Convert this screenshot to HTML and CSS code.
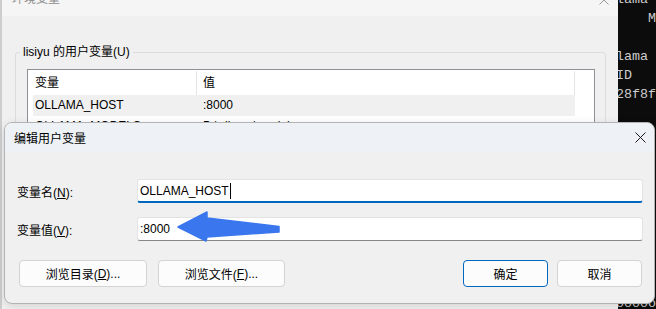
FILE: index.html
```html
<!DOCTYPE html>
<html lang="zh-CN">
<head>
<meta charset="utf-8">
<title>编辑用户变量</title>
<link rel="stylesheet" href="styles.css">
</head>
<body>
<div class="desktop">
  <div class="envwin">
    <div class="env-title">
      <span class="env-title-text">环境变量</span>
      <svg class="env-close" width="10" height="10" viewBox="0 0 10 10"><path d="M0.5 0.5 L9.5 9.5 M9.5 0.5 L0.5 9.5" stroke="#9a9a9a" stroke-width="1" fill="none"/></svg>
    </div>
    <div class="env-body">
      <fieldset class="group">
        <legend>lisiyu 的用户变量(U)</legend>
        <div class="list">
          <div class="list-row list-head">
            <div class="cell">变量</div><div class="cell">值</div>
          </div>
          <div class="list-row selected">
            <div class="cell">OLLAMA_HOST</div><div class="cell">:8000</div>
          </div>
          <div class="list-row">
            <div class="cell">OLLAMA_MODELS</div><div class="cell">D:\ollama\models</div>
          </div>
          <div class="list-row">
            <div class="cell">Path</div><div class="cell">C:\Users\lisiyu\AppData\Local\Microsoft\WindowsApps</div>
          </div>
        </div>
      </fieldset>
    </div>
  </div>
  <div class="terminal">
<pre class="term-text">lama
    M

lama
ID
28f8f










ooooo</pre>
  </div>
</div>

<div class="dialog">
  <div class="dlg-title">
    <span>编辑用户变量</span>
    <svg class="dlg-close" width="11" height="11" viewBox="0 0 11 11"><path d="M0.5 0.5 L10.5 10.5 M10.5 0.5 L0.5 10.5" stroke="#1a1a1a" stroke-width="1" fill="none"/></svg>
  </div>
  <div class="dlg-body">
    <div class="field-row">
      <span class="field-label">变量名(<u>N</u>):</span>
      <div class="textbox focused">OLLAMA_HOST<span class="caret"></span></div>
    </div>
    <div class="field-row">
      <span class="field-label">变量值(<u>V</u>):</span>
      <div class="textbox">:8000</div>
    </div>
    <div class="btn-row">
      <button class="btn btn-wide">浏览目录(<u>D</u>)...</button>
      <button class="btn btn-wide">浏览文件(<u>F</u>)...</button>
      <button class="btn btn-ok">确定</button>
      <button class="btn btn-cancel">取消</button>
    </div>
  </div>
</div>

<svg class="arrow" width="106" height="34" viewBox="0 0 106 34">
  <polygon points="2,17 31,2 31,8 103,16.5 103,22 31,27 30,31" fill="#3a77ee" stroke="#3a77ee" stroke-width="1.5" stroke-linejoin="round"/>
</svg>
</body>
</html>
```

FILE: styles.css
```css
* { box-sizing: border-box; }
html, body { margin: 0; padding: 0; }
body {
  width: 656px;
  height: 309px;
  overflow: hidden;
  position: relative;
  font-family: "Liberation Sans", "Noto Sans CJK SC", sans-serif;
  font-size: 12px;
  color: #000;
  background: #f0f0f0;
}
u { text-decoration: underline; text-underline-offset: 1px; }

.desktop { display: flex; height: 309px; }

/* background window */
.envwin {
  width: 618px;
  flex: none;
  display: flex;
  flex-direction: column;
  background: #f0f0f0;
  border-left: 2px solid #cdcdcd;
}
.env-title {
  height: 16px;
  flex: none;
  background: #f5f5f5;
  display: flex;
  align-items: flex-start;
  overflow: hidden;
  padding-left: 10px;
}
.env-title-text { color: #8c8c8c; line-height: 16px; margin-top: -9px; }
.env-close { margin-left: auto; margin-right: 9px; margin-top: -5px; }

.env-body { flex: 1; padding: 28px 12px 0 13px; overflow: hidden; }
.group {
  margin: 0;
  border: 1px solid #dcdcdc;
  border-radius: 3px;
  padding: 9px 10px 0 11px;
  min-width: 0;
  height: 240px;
}
.group legend {
  padding: 0 3px;
  margin-left: -7px;
  line-height: 16px;
  color: #000;
}
.list {
  width: 568px;
  height: 170px;
  border: 1px solid #8f9095;
  background: #fff;
  padding: 1px 19px 0 5px;
  overflow: hidden;
}
.list-row {
  display: grid;
  grid-template-columns: 164px 1fr;
  height: 21px;
  line-height: 21px;
}
.list-row .cell { padding-left: 2px; white-space: nowrap; overflow: hidden; }
.list-row .cell + .cell { padding-left: 6px; }
.list-head { height: 24px; line-height: 24px; }
.list-head .cell { border-right: 1px solid #e5e5e5; }
.list-row.selected { background: #f0f0f0; }

/* terminal on the right */
.terminal {
  flex: 1;
  background: #0c0c0c;
  overflow: hidden;
}
.term-text {
  margin: -10px 0 0 -2px;
  font-family: "Liberation Mono", monospace;
  font-size: 13.33px;
  line-height: 19px;
  color: #cccccc;
}

/* front dialog */
.dialog {
  position: absolute;
  left: 4px;
  top: 122px;
  width: 651px;
  height: 182px;
  background: #f0f0f0;
  border: 1px solid #b3b3b3;
  border-radius: 8px;
  overflow: hidden;
  box-shadow: 0 2px 8px rgba(0, 0, 0, 0.12);
  z-index: 2;
}
.dlg-title {
  height: 29px;
  background: #eef2f7;
  display: flex;
  align-items: center;
  justify-content: space-between;
  padding: 0 8px 0 9px;
}
.dlg-body {
  display: flex;
  flex-direction: column;
  padding: 27px 11px 0 12px;
}
.field-row {
  display: grid;
  grid-template-columns: 120px 1fr;
  align-items: center;
  height: 24px;
}
.field-row + .field-row { margin-top: 14px; }
.textbox {
  height: 24px;
  background: #fff;
  border: 1px solid #e3e3e3;
  border-bottom: 1px solid #868686;
  border-radius: 3px;
  padding-left: 2px;
  display: flex;
  align-items: center;
  white-space: nowrap;
}
.textbox.focused { border-bottom: 2px solid #0067c0; }
.caret {
  display: inline-block;
  width: 1px;
  height: 16px;
  background: #000;
  margin-left: 1px;
}

.btn-row {
  display: flex;
  margin-top: 19px;
  padding-left: 2px;
  padding-right: 1px;
}
.btn {
  font: inherit;
  color: #000;
  height: 27px;
  padding: 0;
  border: 1px solid #d3d3d3;
  border-radius: 4px;
  background: #fcfcfc;
  display: flex;
  align-items: center;
  justify-content: center;
}
.btn-wide { width: 128px; }
.btn-wide + .btn-wide { width: 127px; margin-left: 11px; }
.btn-ok { width: 85px; margin-left: auto; border-color: #0067c0; }
.btn-cancel { width: 85px; margin-left: 9px; }

.arrow {
  position: absolute;
  left: 176px;
  top: 210px;
  z-index: 3;
}
```
